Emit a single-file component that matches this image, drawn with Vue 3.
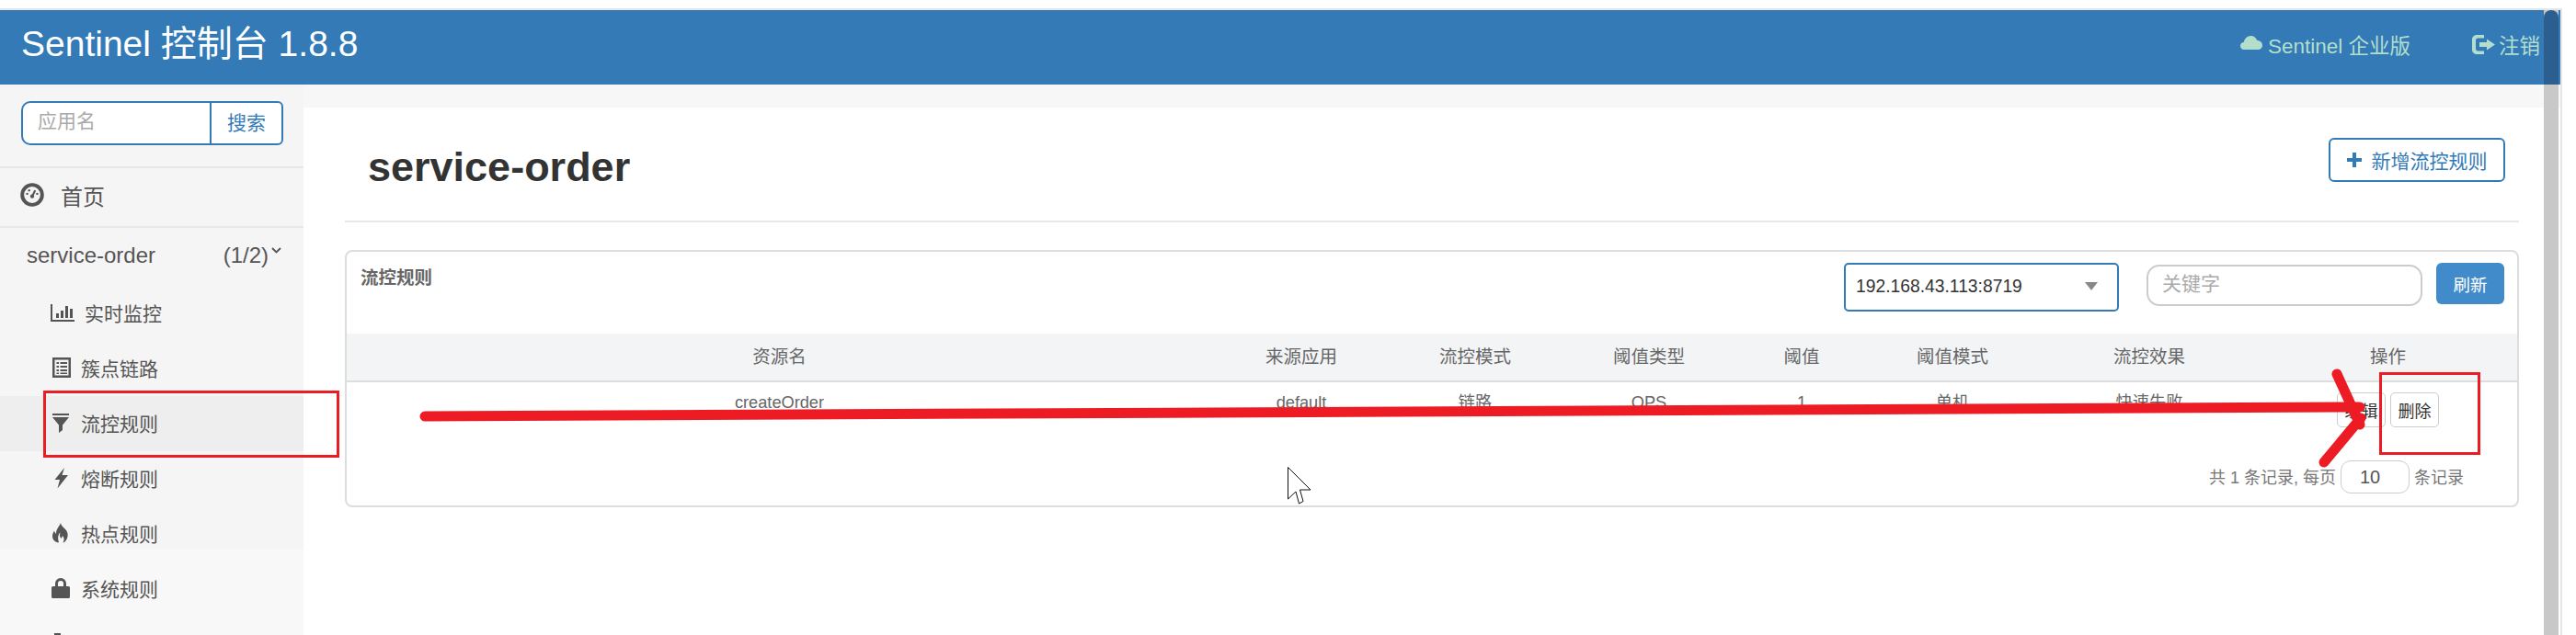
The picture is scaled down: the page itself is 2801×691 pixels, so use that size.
<script setup>
const columns = [
  { head: '资源名', cell: 'createOrder' },
  { head: '来源应用', cell: 'default' },
  { head: '流控模式', cell: '链路' },
  { head: '阈值类型', cell: 'QPS' },
  { head: '阈值', cell: '1' },
  { head: '阈值模式', cell: '单机' },
  { head: '流控效果', cell: '快速失败' }
]
const menu = [
  { label: '实时监控', icon: 'stats' },
  { label: '簇点链路', icon: 'list' },
  { label: '流控规则', icon: 'filter', active: true },
  { label: '熔断规则', icon: 'flash' },
  { label: '热点规则', icon: 'fire' },
  { label: '系统规则', icon: 'lock' },
  { label: '', icon: 'tip' }
]
</script>

<template>
  <div class="page">
    <div class="frame">
      <header class="navbar">
        <div class="brand">Sentinel 控制台 1.8.8</div>
        <div class="nav-right">
          <a class="nav-link">
            <svg class="i-cloud" viewBox="0 0 24 15"><path fill="currentColor" d="M4 15C1.500 15 0 13.200 0 11c0-2.400 1.800-4 3.800-4C4.500 3 7.500 0 11.500 0c3.300 0 5.800 2 6.700 5C21.500 5 24 7.300 24 10.200 24 13 22 15 19 15z"/></svg>
            Sentinel 企业版
          </a>
          <a class="nav-link out">
            <svg class="i-out" viewBox="0 0 25 21"><path fill="currentColor" d="M5 0h8v3.500H6.500C5 3.500 4 4.500 4 6v9c0 1.500 1 2.500 2.500 2.500H13V21H5c-2.800 0-5-2.200-5-5V5c0-2.800 2.200-5 5-5zM16 4.500l9 6-9 6v-3.500H8V8h8z"/></svg>
            注销
          </a>
        </div>
      </header>

      <div class="body">
        <aside class="sidebar">
          <div class="search-zone">
            <div class="search">
              <span class="search-input">应用名</span>
              <span class="search-btn">搜索</span>
            </div>
          </div>
          <div class="home">
            <svg class="i-home" viewBox="0 0 24 24"><circle cx="12" cy="12" r="10" fill="none" stroke="#555" stroke-width="3.600"/><path d="M12 13.500 15 7.500" stroke="#555" stroke-width="2"/><circle cx="12" cy="13.500" r="2" fill="#555"/><circle cx="7" cy="11" r="1.100" fill="#555"/><circle cx="9" cy="7.500" r="1.100" fill="#555"/><circle cx="17" cy="11" r="1.100" fill="#555"/></svg>
            <span>首页</span>
          </div>
          <div class="app-row">
            <span>service-order</span>
            <span class="count">(1/2)<svg class="i-chev" viewBox="0 0 11 7"><path d="M1 1l4.500 4.500L10 1" fill="none" stroke="#555" stroke-width="1.800"/></svg></span>
          </div>
          <nav class="menu">
            <div v-for="m in menu" :key="m.icon" class="menu-item" :class="{ active: m.active }">
              <svg class="micon" :class="{ wide: m.icon === 'stats' }" :viewBox="m.icon === 'stats' ? '0 0 26 24' : '0 0 22 24'">
                <template v-if="m.icon === 'stats'">
                  <path fill="#555" d="M0 3h2v17h24v2H0zM6 13h3v5H6zM11 10h3v8h-3zM16 5h3v13h-3zM21 8h3v10h-3z"/>
                </template>
                <template v-else-if="m.icon === 'list'">
                  <path fill="#555" fill-rule="evenodd" d="M2 1h20v22H2zM4.500 3.500v17h15v-17zM6.500 6h2.500v2H6.500zM10.500 6h7.500v2h-7.500zM6.500 10h2.500v2H6.500zM10.500 10h7.500v2h-7.500zM6.500 14h2.500v2H6.500zM10.500 14h7.500v2h-7.500zM6.500 17.500h2.500v1.500H6.500zM10.500 17.500h7.500v1.500h-7.500z"/>
                </template>
                <template v-else-if="m.icon === 'filter'">
                  <path fill="#555" d="M2 2h18v2H2zM2 6h18l-7 8.500V20l-4 3v-8.500z"/>
                </template>
                <template v-else-if="m.icon === 'flash'">
                  <path fill="#555" d="M15 1 4.500 14H10l-2.500 9.500L19 9h-6.500z"/>
                </template>
                <template v-else-if="m.icon === 'fire'">
                  <path fill="#555" d="M11 1c.5 3.500 3.500 5 6 8 2.500 3.500 2.500 9-2 13l-1.500.5c1.500-2.500 1.500-5.500-.5-7.500-.5 1.500-1 2-1.500 3-1.500-1.500-2-3.500-1-6.500-2.500 2-3 6.500-1.500 10.500l-1 .5C4.500 21.500 2 19 2 15.500c0-2.500 1-4.500 2-6 .3 1.500 1 2.500 2 3.300C6 7.500 9.500 5 11 1z"/>
                </template>
                <template v-else-if="m.icon === 'lock'">
                  <path fill="#555" fill-rule="evenodd" d="M5 10V7a6 6 0 0 1 12 0v3h2.500A1.500 1.500 0 0 1 21 11.500v10a1.500 1.500 0 0 1-1.500 1.500h-17A1.500 1.500 0 0 1 1 21.500v-10A1.500 1.500 0 0 1 2.500 10zM8 10h6V7a3 3 0 0 0-6 0z"/>
                </template>
                <template v-else>
                  <rect x="4" y="1" width="7" height="22" fill="#555"/>
                </template>
              </svg>
              <span v-if="m.label">{{ m.label }}</span>
            </div>
          </nav>
        </aside>

        <main class="main">
          <div class="band"></div>
          <div class="content">
            <div class="title-row">
              <h1>service-order</h1>
              <button class="add-btn">
                <svg class="i-plus" viewBox="0 0 16 16"><path fill="#337ab7" d="M6 0h4v6h6v4h-6v6H6v-6H0V6h6z"/></svg>
                新增流控规则
              </button>
            </div>
            <section class="panel">
              <div class="panel-head">
                <span class="panel-title">流控规则</span>
                <div class="tools">
                  <div class="select">
                    <span>192.168.43.113:8719</span>
                    <i class="caret"></i>
                  </div>
                  <span class="keyword">关键字</span>
                  <button class="refresh">刷新</button>
                </div>
              </div>
              <div class="table-row thead">
                <div v-for="c in columns" :key="c.head">{{ c.head }}</div>
                <div>操作</div>
              </div>
              <div class="table-row tbody">
                <div v-for="c in columns" :key="c.head" class="cell">{{ c.cell }}</div>
                <div class="ops">
                  <button>编辑</button>
                  <button>删除</button>
                </div>
              </div>
              <div class="pager">
                <span class="pager-text">共 1 条记录, 每页</span>
                <span class="size">10</span>
                <span class="pager-text">条记录</span>
              </div>
            </section>
          </div>
        </main>
      </div>
    </div>

    <div class="scroll"><div class="scroll-top"></div></div>
    <div class="mark mark-a"></div>
    <div class="mark mark-b"></div>
    <svg class="ink" width="2801" height="691" viewBox="0 0 2801 691">
      <g fill="none" stroke="#ed1c24" stroke-width="11" stroke-linecap="round">
        <path d="M462 453 L2566 443"/>
        <path d="M2541 407 L2566 462"/>
        <path d="M2527 503 L2567 455"/>
      </g>
      <path d="M1400.500 508.500V543l8.500-8 3.500 13 4.500-2.500-3.500-12.500h11.500z" fill="#fff" stroke="#111" stroke-width="1"/>
    </svg>
  </div>
</template>

<style>
html, body { margin: 0; background: #fff; }
</style>

<style scoped>
.page {
  position: relative;
  width: 2801px;
  height: 691px;
  overflow: hidden;
  padding-top: 9px;
  box-sizing: border-box;
  font-family: "Liberation Sans", "Noto Sans CJK SC", sans-serif;
  color: #555;
}
.frame {
  width: 2786px;
  height: 682px;
  box-sizing: border-box;
  border-top: 2px solid #e6e6e6;
  border-right: 2px solid #e6e6e6;
  display: flex;
  flex-direction: column;
}
.navbar {
  height: 81px;
  flex: none;
  background: #337ab7;
  display: flex;
  align-items: center;
  justify-content: space-between;
  padding: 0 22px 0 23px;
}
.brand { color: #fff; font-size: 39px; line-height: 1; margin-top: -8px; }
.nav-right { display: flex; align-items: center; color: #b2dfcd; font-size: 22.500px; margin-top: -7px; }
.nav-link { display: flex; align-items: center; gap: 6px; }
.out { margin-left: 67px; gap: 4px; }
.i-cloud { width: 24px; height: 15px; margin-top: -4px; }
.i-out { width: 25px; height: 21px; }

.body { flex: 1; display: flex; min-height: 0; }
.sidebar {
  width: 330px;
  flex: none;
  background: linear-gradient(#f5f5f5 506px, #f8f8f8 506px);
  overflow: hidden;
}
.search-zone { height: 91px; box-sizing: border-box; padding: 18px 22px 0 23px; border-bottom: 2px solid #e7e7e7; }
.search {
  height: 48px;
  box-sizing: border-box;
  display: flex;
  border: 2px solid #337ab7;
  border-radius: 10px 6px 6px 10px;
  background: #fff;
  font-size: 21px;
}
.search-input { width: 203px; flex: none; padding-left: 16px; box-sizing: border-box; color: #aaa; line-height: 40px; }
.search-btn { flex: 1; border-left: 2px solid #337ab7; color: #337ab7; text-align: center; line-height: 44px; }
.home {
  height: 65px;
  box-sizing: border-box;
  border-bottom: 2px solid #e7e7e7;
  display: flex;
  align-items: center;
  padding: 0 0 4px 22px;
  font-size: 24px;
  color: #555;
}
.i-home { width: 26px; height: 26px; margin-right: 18px; margin-top: -2px; }
.app-row {
  height: 63px;
  box-sizing: border-box;
  display: flex;
  justify-content: space-between;
  align-items: center;
  padding: 0 24px 3px 29px;
  font-size: 24px;
}
.count { display: flex; align-items: center; }
.i-chev { width: 11px; height: 7px; margin: -11px 0 0 3px; }
.menu-item {
  height: 60px;
  box-sizing: border-box;
  display: flex;
  align-items: center;
  padding: 0 0 3px 55px;
  font-size: 21px;
}
.menu-item.active { background: #eee; }
.micon { width: 22px; height: 24px; margin-right: 11px; flex: none; }
.micon.wide { width: 26px; }

.main { flex: 1; min-width: 0; display: flex; flex-direction: column; }
.band { height: 25px; background: #f7f7f7; flex: none; }
.content { padding: 0 45px; }
.title-row {
  height: 125px;
  box-sizing: border-box;
  border-bottom: 2px solid #e7e7e7;
  display: flex;
  justify-content: space-between;
  align-items: flex-start;
  padding: 33px 15px 0 25px;
}
h1 { margin: 0; font-size: 45px; line-height: 63px; font-weight: 700; color: #333; }
.add-btn {
  width: 192px;
  height: 48px;
  box-sizing: border-box;
  border: 2px solid #337ab7;
  border-radius: 6px;
  background: #fff;
  color: #337ab7;
  font: inherit;
  font-size: 21px;
  display: flex;
  align-items: center;
  justify-content: center;
  gap: 11px;
  padding: 0;
}
.i-plus { width: 16px; height: 16px; }

.panel {
  margin-top: 30px;
  height: 280px;
  box-sizing: border-box;
  border: 2px solid #ddd;
  border-radius: 8px;
  overflow: hidden;
}
.panel-head {
  height: 89px;
  display: flex;
  justify-content: space-between;
  padding: 12px 14px 0 15px;
  box-sizing: border-box;
}
.panel-title { font-size: 19.500px; font-weight: 700; color: #666; line-height: 33px; }
.tools { display: flex; align-items: flex-start; }
.select {
  width: 299px;
  height: 53px;
  box-sizing: border-box;
  border: 2px solid #337ab7;
  border-radius: 5px;
  display: flex;
  align-items: center;
  justify-content: space-between;
  padding: 0 21px 2px 11px;
  font-size: 19.300px;
  color: #333;
}
.caret {
  width: 0;
  height: 0;
  border-left: 7px solid transparent;
  border-right: 7px solid transparent;
  border-top: 9px solid #888;
}
.keyword {
  width: 300px;
  height: 45px;
  margin: 2px 15px 0 30px;
  box-sizing: border-box;
  border: 2px solid #ccc;
  border-radius: 14px;
  padding-left: 15px;
  font-size: 21px;
  color: #aaa;
  line-height: 38px;
}
.refresh {
  width: 74px;
  height: 45px;
  border: 0;
  border-radius: 6px;
  background: #428bca;
  color: #fff;
  font: inherit;
  font-size: 18.500px;
  padding: 0;
}
.table-row { display: grid; grid-template-columns: 941px 194px 184px 194px 138px 190px 238px 1fr; text-align: center; }
.thead {
  height: 53px;
  box-sizing: border-box;
  background: #f3f4f6;
  border-bottom: 2px solid #ddd;
  line-height: 50px;
  font-size: 19.500px;
  color: #666;
}
.tbody { height: 85px; font-size: 18.200px; color: #666; }
.cell { padding-top: 11px; line-height: 22px; }
.ops { padding-top: 11px; display: flex; justify-content: center; gap: 5px; }
.ops button {
  width: 53px;
  height: 38px;
  box-sizing: border-box;
  border: 1.500px solid #ccc;
  border-radius: 5px;
  background: #fff;
  color: #333;
  font: inherit;
  font-size: 18px;
  padding: 0;
}
.pager {
  display: flex;
  justify-content: flex-end;
  align-items: center;
  gap: 5px;
  padding-right: 58px;
  font-size: 18px;
  color: #777;
}
.pager-text { margin-top: -3px; }
.size {
  width: 75px;
  height: 36px;
  box-sizing: border-box;
  border: 1.500px solid #ccc;
  border-radius: 11px;
  color: #555;
  font-size: 20px;
  line-height: 34px;
  padding-left: 20px;
}

.scroll { position: absolute; left: 2766px; top: 11px; bottom: 0; width: 16px; background: #c8c8c8; }
.scroll-top { height: 81px; background: #2c5f90; border-radius: 8px 8px 0 0; }
.mark { position: absolute; box-sizing: border-box; border: 3px solid #ed1c24; }
.mark-a { left: 47px; top: 425px; width: 322px; height: 73px; }
.mark-b { left: 2587px; top: 405px; width: 110px; height: 90px; }
.ink { position: absolute; left: 0; top: 0; pointer-events: none; }
</style>
